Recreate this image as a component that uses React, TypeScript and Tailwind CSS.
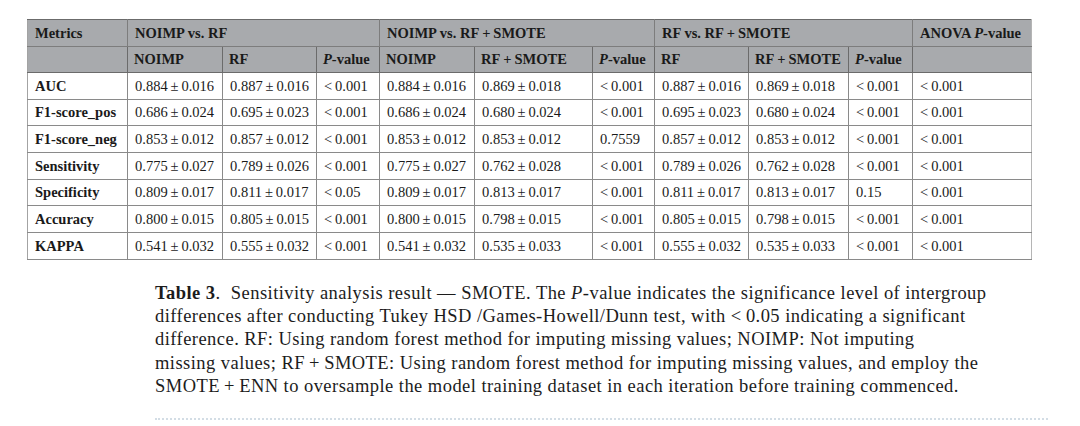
const groups = [
  { label: "NOIMP vs. RF", span: 3 },
  { label: "NOIMP vs. RF\u2009+\u2009SMOTE", span: 3 },
  { label: "RF vs. RF\u2009+\u2009SMOTE", span: 3 },
];

const subHeads = [
  "NOIMP",
  "RF",
  "P",
  "NOIMP",
  "RF\u2009+\u2009SMOTE",
  "P",
  "RF",
  "RF\u2009+\u2009SMOTE",
  "P",
];

const colWidths = [100, 95, 94, 63, 95, 118, 62, 94, 100, 64, 119];

const pm = (a: string, b: string) => `${a}\u2009\u00b1\u2009${b}`;
const lt = (v: string) => `<\u2009${v}`;

const rows: [string, string[]][] = [
  ["AUC", [pm("0.884", "0.016"), pm("0.887", "0.016"), lt("0.001"), pm("0.884", "0.016"), pm("0.869", "0.018"), lt("0.001"), pm("0.887", "0.016"), pm("0.869", "0.018"), lt("0.001"), lt("0.001")]],
  ["F1-score_pos", [pm("0.686", "0.024"), pm("0.695", "0.023"), lt("0.001"), pm("0.686", "0.024"), pm("0.680", "0.024"), lt("0.001"), pm("0.695", "0.023"), pm("0.680", "0.024"), lt("0.001"), lt("0.001")]],
  ["F1-score_neg", [pm("0.853", "0.012"), pm("0.857", "0.012"), lt("0.001"), pm("0.853", "0.012"), pm("0.853", "0.012"), "0.7559", pm("0.857", "0.012"), pm("0.853", "0.012"), lt("0.001"), lt("0.001")]],
  ["Sensitivity", [pm("0.775", "0.027"), pm("0.789", "0.026"), lt("0.001"), pm("0.775", "0.027"), pm("0.762", "0.028"), lt("0.001"), pm("0.789", "0.026"), pm("0.762", "0.028"), lt("0.001"), lt("0.001")]],
  ["Specificity", [pm("0.809", "0.017"), pm("0.811", "0.017"), lt("0.05"), pm("0.809", "0.017"), pm("0.813", "0.017"), lt("0.001"), pm("0.811", "0.017"), pm("0.813", "0.017"), "0.15", lt("0.001")]],
  ["Accuracy", [pm("0.800", "0.015"), pm("0.805", "0.015"), lt("0.001"), pm("0.800", "0.015"), pm("0.798", "0.015"), lt("0.001"), pm("0.805", "0.015"), pm("0.798", "0.015"), lt("0.001"), lt("0.001")]],
  ["KAPPA", [pm("0.541", "0.032"), pm("0.555", "0.032"), lt("0.001"), pm("0.541", "0.032"), pm("0.535", "0.033"), lt("0.001"), pm("0.555", "0.032"), pm("0.535", "0.033"), lt("0.001"), lt("0.001")]],
];

function PValue() {
  return (
    <>
      <i>P</i>-value
    </>
  );
}

export default function App() {
  return (
    <div
      className="min-h-[426px] w-[1080px] bg-white text-[#1a1a1a]"
      style={{ fontFamily: '"Liberation Serif", "Times New Roman", serif' }}
    >
      <div className="pl-[27px] pt-[19px]">
        <table className="w-[1004px] table-fixed border-collapse border-t border-b border-l border-r border-t-[#6b6b6b] border-b-[#555] border-l-[#a3a3a3] border-r-[#b5b5b5] text-[14.5px] leading-none">
          <colgroup>
            {colWidths.map((w, i) => (
              <col key={i} style={{ width: w }} />
            ))}
          </colgroup>
          <thead>
            <tr className="h-[27px] bg-[#a8aaad] font-bold">
              <th className="border-r border-b border-[#7d7d7d] px-[7px] text-left">Metrics</th>
              {groups.map((g) => (
                <th key={g.label} colSpan={g.span} className="whitespace-nowrap border-r border-b border-[#7d7d7d] px-[7px] text-left">
                  {g.label}
                </th>
              ))}
              <th className="whitespace-nowrap border-b border-[#7d7d7d] px-[7px] text-left">
                ANOVA <PValue />
              </th>
            </tr>
            <tr className="h-[26px] bg-[#a8aaad] font-bold">
              <th className="border-r border-b border-[#6b6b6b] px-[7px] text-left" />
              {subHeads.map((h, i) => (
                <th key={i} className="whitespace-nowrap border-r border-b border-[#6b6b6b] px-[6px] text-left">
                  {h === "P" ? <PValue /> : h}
                </th>
              ))}
              <th className="border-b border-[#6b6b6b] px-[7px] text-left" />
            </tr>
          </thead>
          <tbody>
            {rows.map(([name, vals]) => (
              <tr key={name} className="h-[26.7px]">
                <td className="border-r border-b border-[#8a8a8a] px-[7px] font-bold">{name}</td>
                {vals.map((v, i) => (
                  <td
                    key={i}
                    className={
                      i === vals.length - 1
                        ? "border-b border-[#8a8a8a] px-[7px] whitespace-nowrap"
                        : "border-r border-b border-[#8a8a8a] px-[7px] whitespace-nowrap"
                    }
                  >
                    {v}
                  </td>
                ))}
              </tr>
            ))}
          </tbody>
        </table>
      </div>

      <div className="mt-[22px] pl-[155px] text-[18.5px] leading-[23.3px] tracking-[0.45px] text-[#1c1c1c]">
        <p className="whitespace-nowrap">
          <b>Table 3</b>.&nbsp; Sensitivity analysis result — SMOTE. The <i>P</i>-value indicates the significance level of intergroup
        </p>
        <p className="whitespace-nowrap">
          differences after conducting Tukey HSD /Games-Howell/Dunn test, with {"<\u20090.05"} indicating a significant
        </p>
        <p className="whitespace-nowrap">
          difference. RF: Using random forest method for imputing missing values; NOIMP: Not imputing
        </p>
        <p className="whitespace-nowrap">
          missing values; RF{"\u2009+\u2009"}SMOTE: Using random forest method for imputing missing values, and employ the
        </p>
        <p className="whitespace-nowrap">
          SMOTE{"\u2009+\u2009"}ENN to oversample the model training dataset in each iteration before training commenced.
        </p>
        <div className="mt-[20px] mr-[32px] border-t-2 border-dotted border-[#d3dde5]" />
      </div>
    </div>
  );
}
